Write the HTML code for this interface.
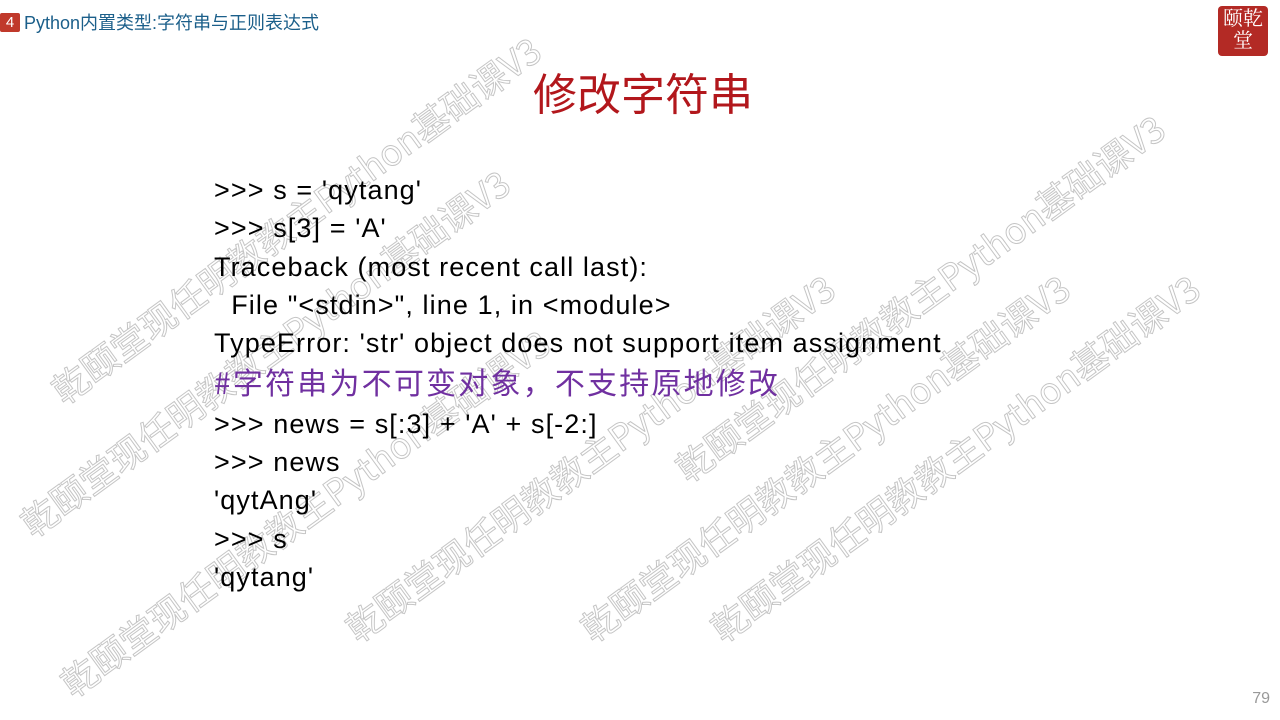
<!DOCTYPE html>
<html><head><meta charset="utf-8"><style>
body{margin:0;width:1280px;height:720px;background:#fff;position:relative;overflow:hidden;font-family:"Liberation Sans","Noto Sans CJK SC",sans-serif;}
.hdr{position:absolute;left:0;top:11px;height:22px;display:flex;align-items:center;font-size:18px;color:#1b5f8a}
.num{background:#c0392b;color:#fff;width:20px;height:19px;line-height:19px;text-align:center;margin-right:4px;font-size:15px;border-radius:2px}
.title{position:absolute;left:3px;width:1280px;top:59px;text-align:center;font-size:44px;color:#b2171c;font-family:"Noto Sans CJK SC",sans-serif}
.code{position:absolute;left:214px;top:171px;font-size:27px;letter-spacing:1.1px;line-height:38.3px;color:#000;white-space:pre}
.cm{color:#7030a0;font-family:"Noto Sans CJK SC",sans-serif;font-size:30px;letter-spacing:2.2px}
.wm{position:absolute;font-size:36px;color:rgba(255,255,255,0);-webkit-text-stroke:1px rgba(150,150,150,0.55);transform-origin:0 100%;transform:rotate(-36deg);white-space:nowrap;font-family:"Noto Sans CJK SC",sans-serif;line-height:1}
.pg{position:absolute;right:10px;top:690px;color:#999;font-size:16px}
.logo{position:absolute;left:1218px;top:6px;width:50px;height:50px;background:#b32a25;border-radius:4px;color:#fff;font-size:20px;line-height:22px;text-align:center;font-family:"Noto Serif CJK SC",serif}
</style></head><body>
<div class="wm" style="left:66px;top:372px">乾颐堂现任明教教主Python基础课V3</div>
<div class="wm" style="left:35px;top:505px">乾颐堂现任明教教主Python基础课V3</div>
<div class="wm" style="left:75px;top:665px">乾颐堂现任明教教主Python基础课V3</div>
<div class="wm" style="left:360px;top:610px">乾颐堂现任明教教主Python基础课V3</div>
<div class="wm" style="left:595px;top:610px">乾颐堂现任明教教主Python基础课V3</div>
<div class="wm" style="left:690px;top:450px">乾颐堂现任明教教主Python基础课V3</div>
<div class="wm" style="left:725px;top:610px">乾颐堂现任明教教主Python基础课V3</div>
<div class="hdr"><span class="num">4</span>Python内置类型:字符串与正则表达式</div>
<div class="logo">颐乾<br>堂</div>
<div class="title">修改字符串</div>
<div class="code">&gt;&gt;&gt; s = 'qytang'
&gt;&gt;&gt; s[3] = 'A'
Traceback (most recent call last):
  File "&lt;stdin&gt;", line 1, in &lt;module&gt;
TypeError: 'str' object does not support item assignment
<span class="cm">#字符串为不可变对象，不支持原地修改</span>
&gt;&gt;&gt; news = s[:3] + 'A' + s[-2:]
&gt;&gt;&gt; news
'qytAng'
&gt;&gt;&gt; s
'qytang'</div>
<div class="pg">79</div>
</body></html>
